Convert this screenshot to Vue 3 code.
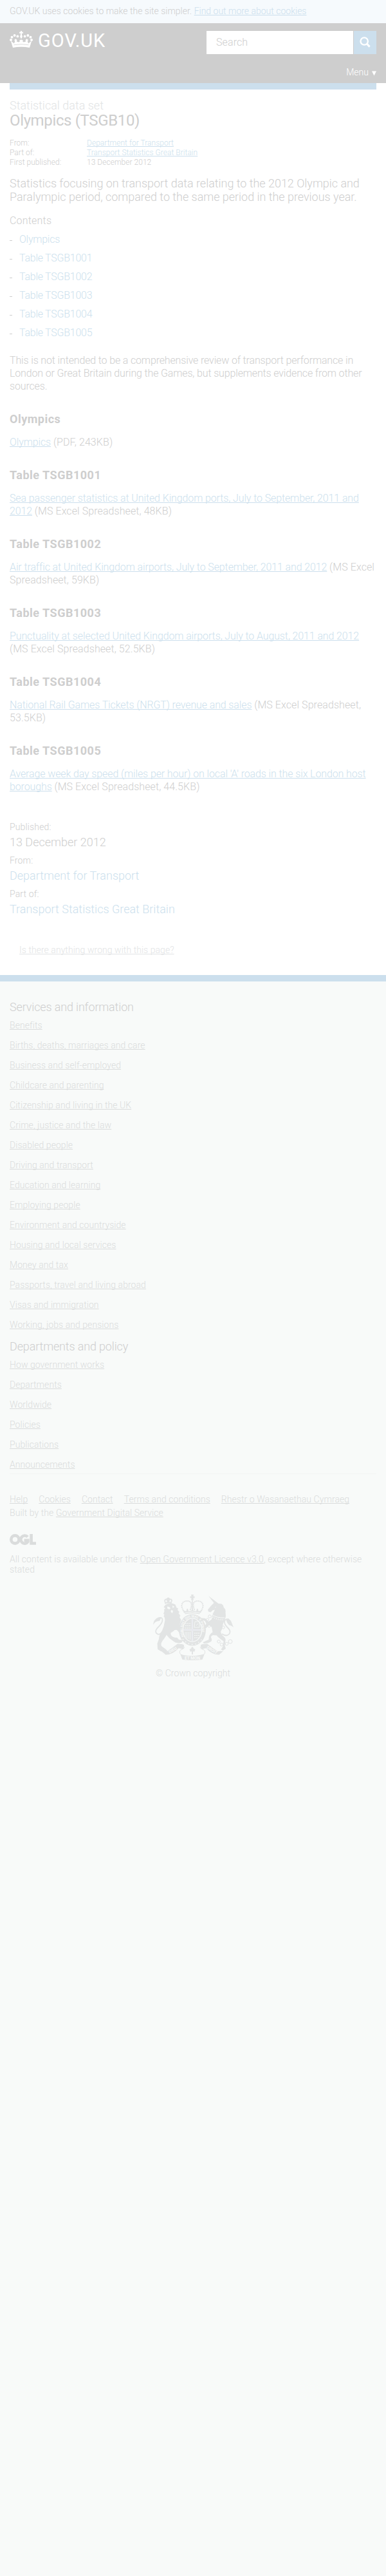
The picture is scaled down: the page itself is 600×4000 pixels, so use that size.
<script setup>
const contents = ['Olympics', 'Table TSGB1001', 'Table TSGB1002', 'Table TSGB1003', 'Table TSGB1004', 'Table TSGB1005']
const tables = [
  { title: 'Olympics', link: 'Olympics', meta: '(PDF, 243KB)' },
  { title: 'Table TSGB1001', link: 'Sea passenger statistics at United Kingdom ports, July to September, 2011 and 2012', meta: '(MS Excel Spreadsheet, 48KB)' },
  { title: 'Table TSGB1002', link: 'Air traffic at United Kingdom airports, July to September, 2011 and 2012', meta: '(MS Excel Spreadsheet, 59KB)' },
  { title: 'Table TSGB1003', link: 'Punctuality at selected United Kingdom airports, July to August, 2011 and 2012', meta: '(MS Excel Spreadsheet, 52.5KB)' },
  { title: 'Table TSGB1004', link: 'National Rail Games Tickets (NRGT) revenue and sales', meta: '(MS Excel Spreadsheet, 53.5KB)' },
  { title: 'Table TSGB1005', link: "Average week day speed (miles per hour) on local 'A' roads in the six London host boroughs", meta: '(MS Excel Spreadsheet, 44.5KB)' },
]
const services = ['Benefits', 'Births, deaths, marriages and care', 'Business and self-employed', 'Childcare and parenting', 'Citizenship and living in the UK', 'Crime, justice and the law', 'Disabled people', 'Driving and transport', 'Education and learning', 'Employing people', 'Environment and countryside', 'Housing and local services', 'Money and tax', 'Passports, travel and living abroad', 'Visas and immigration', 'Working, jobs and pensions']
const departments = ['How government works', 'Departments', 'Worldwide', 'Policies', 'Publications', 'Announcements']
const support = ['Help', 'Cookies', 'Contact', 'Terms and conditions', 'Rhestr o Wasanaethau Cymraeg']
</script>

<template>
  <div class="page">
    <div class="cookie">GOV.UK uses cookies to make the site simpler. <a>Find out more about cookies</a></div>
    <header class="header">
      <div class="bar">
        <div class="brand">
          <svg class="crown" width="36" height="26" viewBox="0 0 36 26">
            <g fill="#fff">
              <path d="M16.900 0h2.200l-.3 1.800 2-.3v2.600l-2-.3.200 2 .9 3.200-1.900 3.500-1.900-3.500.9-3.200.2-2-2 .3V1.500l2 .3z" />
              <circle cx="2" cy="14" r="2" /><circle cx="3.500" cy="9.700" r="1.900" /><circle cx="7.600" cy="6.900" r="2" /><circle cx="12.400" cy="8.400" r="1.900" />
              <circle cx="34" cy="14" r="2" /><circle cx="32.500" cy="9.700" r="1.900" /><circle cx="28.400" cy="6.900" r="2" /><circle cx="23.600" cy="8.400" r="1.900" />
              <path d="M1.800 15.500l5.200 4 1.200-3.500-1-2 2.300-1.800 2 2-.6 2.200 3.200 1 1.700-1-.6-2 2.800-1 2.800 1-.6 2 1.700 1 3.200-1-.6-2.200 2-2 2.300 1.800-1 2 1.200 3.500 5.200-4L31 26Q18 23.700 5 26z" />
            </g>
            <path d="M6.500 21.700q11.500-2 23 0" fill="none" stroke="#cecece" stroke-width=".7" />
          </svg>
          <span class="name">GOV.UK</span>
        </div>
        <div class="search">
          <div class="field">Search</div>
          <div class="go">
            <svg width="18" height="18" viewBox="0 0 18 18"><circle cx="7.200" cy="7" r="5.700" fill="none" stroke="#fff" stroke-width="2.300" /><path d="M11 10.800l4.600 4.800" stroke="#fff" stroke-width="3" /></svg>
          </div>
        </div>
      </div>
      <div class="menu"><span>Menu</span><svg width="7" height="8" viewBox="0 0 7 8"><path d="M0 .5h7L3.500 7.500z" fill="#fff" /></svg></div>
    </header>
    <main class="main">
      <div class="strip"></div>
      <p class="kind">Statistical data set</p>
      <h1>Olympics (TSGB10)</h1>
      <dl class="facts">
        <dt>From:</dt><dd><a>Department for Transport</a></dd>
        <dt>Part of:</dt><dd><a>Transport Statistics Great Britain</a></dd>
        <dt>First published:</dt><dd>13 December 2012</dd>
      </dl>
      <p class="lead">Statistics focusing on transport data relating to the 2012 Olympic and Paralympic period, compared to the same period in the previous year.</p>
      <h2 class="toc-title">Contents</h2>
      <ul class="toc"><li v-for="c in contents" :key="c"><i></i><a>{{ c }}</a></li></ul>
      <p class="intro">This is not intended to be a comprehensive review of transport performance in London or Great Britain during the Games, but supplements evidence from other sources.</p>
      <section v-for="t in tables" :key="t.title" class="table">
        <h3>{{ t.title }}</h3>
        <p><a>{{ t.link }}</a> <span class="meta">{{ t.meta }}</span></p>
      </section>
      <dl class="details">
        <dt>Published:</dt><dd>13 December 2012</dd>
        <dt>From:</dt><dd class="blue">Department for Transport</dd>
        <dt>Part of:</dt><dd class="blue">Transport Statistics Great Britain</dd>
      </dl>
      <p class="report"><a>Is there anything wrong with this page?</a></p>
    </main>
    <footer class="footer">
      <h2>Services and information</h2>
      <ul><li v-for="s in services" :key="s"><a>{{ s }}</a></li></ul>
      <h2>Departments and policy</h2>
      <ul><li v-for="d in departments" :key="d"><a>{{ d }}</a></li></ul>
      <div class="legal">
        <nav><a v-for="s in support" :key="s">{{ s }}</a></nav>
        <p class="built">Built by the <a>Government Digital Service</a></p>
        <svg class="ogl" width="41" height="17" viewBox="0 0 41 17" fill="none" stroke="#dadcdc" stroke-width="4.600">
          <circle cx="8.400" cy="8.500" r="6.100" /><path d="M28 4.600A6.100 6.100 0 1 0 28.400 12V9.700H22.500" /><path d="M33.600 0v14.500H41" />
        </svg>
        <p class="licence">All content is available under the <a>Open Government Licence v3.0</a>, except where otherwise stated</p>
        <div class="crest">
          <svg width="125" height="102" viewBox="0 0 125 102" fill="#e2e4e4">
            <!-- lion -->
            <path d="M18.500 14.800L17 9l1.500-2 2.500-.8L22 5l1.500-.6L25 5l1 1.200 2.800.6L30 9l-1.500 5.200Q23.500 12.500 18.500 14.800z" />
            <path d="M19.500 12l-.6-2.600 1.800-1.200 1.200 3zM27.500 11.500l.6-2.600-1.800-1-1.300 3z" fill="#f8faf9" />
            <path d="M19 16q8-4.500 15.500-.5l2 5 2.500 1-1 2.500 3 3-1.500 2 3 4-1.500 2 2.500 4-1 4q-2.500 5-1 9 4 4 3.500 11l-5-4.500-3-3.500-3.500 0q-2 2.500-6 4.500-.5 4 3 6 3 1.500 7 1.500l2.500 3 6 1-1.500 3.500-4 1-6-1-5-3.500q-6-4-8.500-8.500-3.500 6-6.500 9.500-3 4-1.500 8l5.500 4 3.500 3-2 2.500-8-1.500-5-3-.5-9 2.500-7q.5-8 5-13l2.500-6.500q1-6 2-9.500l-.5-4-1.500-2 1-3-1.500-1 1.500-4-.5-3 2-1.500-2.500-2z" />
            <path d="M22 18.500l3.500 1 1.500 2-2 1.500-3-1.500zM30 17l3 2-2.500 2zM28 24l3 1-1 4-2.500-2z" fill="#f8faf9" />
            <path d="M14 59q-5 5-9 1-3-4 3.500-10 6-6 6-10.500 0-4-4-3.500Q6 37 2 43" fill="none" stroke="#e2e4e4" stroke-width="1.800" />
            <path d="M0 47Q1 38 8 35.500l5 .5q-2 2-3 5-4 0-7 2z" />
            <!-- crown over the garter -->
            <path d="M59.500 3l-.4-3h3.800l-.4 3 2-.4v3l-2-.4.3 3.500h-3.600l.3-3.500-2 .4v-3z" />
            <g fill="none" stroke="#e2e4e4" stroke-width="2">
              <path d="M49 28q-5-7-4.500-11.500Q46 10 52.500 10 58 10 59.500 14q.5 5-2 10M73 28q5-7 4.500-11.500Q76 10 69.500 10 64 10 62.500 14q-.5 5 2 10" stroke-dasharray="2 .7" />
              <path d="M61 9v19" stroke-width="1.600" />
            </g>
            <path d="M47 25l4.500 1 1-4 1.500 0 1 4 4.500-1 1.500-5 1.500 5 4.500 1 1-4h1.500l1 4 4.500-1-3 5.500q-11-2.500-22 0z" />
            <path d="M49.500 28.500q11.500-3 23 0" fill="none" stroke="#f8faf9" stroke-width="1" />
            <!-- garter and shield -->
            <ellipse cx="61" cy="55" rx="21" ry="24.500" />
            <ellipse cx="61" cy="55" rx="15.200" ry="18.800" fill="#f8faf9" />
            <ellipse cx="61" cy="55" rx="14" ry="17.600" />
            <path d="M61 37v36M46.500 55h29" stroke="#f4f6f7" stroke-width="2.200" />
            <path d="M61 37v36M46.500 55h29" stroke="#dfe1ea" stroke-width=".8" />
            <path d="M50 45h9M50 48.500h9M49 52h10M64 60h9M64 63.500h9M64 67h7" stroke="#f8faf9" stroke-width="1" stroke-dasharray="2 1" />
            <path d="M65 42h7v9h-8zM67 48l3-3M50 58v8M52.500 58v10M55 58v11M57.500 58v12" fill="none" stroke="#f8faf9" stroke-width=".8" />
            <path id="garter" d="M46 66C41 47 48 33.500 61 33.500S81 47 76 66" fill="none" />
            <text class="motto" font-size="5.200" dy="1.800"><textPath href="#garter" textLength="76">HONI SOIT QUI MAL Y PENSE</textPath></text>
            <path d="M46 69q7 8 15 8.500T76 69" fill="none" stroke="#f8faf9" stroke-width="1.400" stroke-dasharray="1.500 4" />
            <!-- unicorn -->
            <path d="M86 2l15.500 12 5 .5q3 2 3 5 4 4 3 8l.5 6-2 7q-3 5-3 9-.5 5-3 8 1 5 5.500 8.500 2.500 2 2 5l-1 8 1.500 5-4.500 3-3-1.500 3-5 1-8q-9-6-10.500-9l-6-.5q-3 1-3 3.500 2 4 .5 6-4 3.500-12 3.500l-1-2 9-4q-.5-8 6-11.500l-1.500-8-4-3-5 5-2.500-1.500 3-6-2-4-5-2-.5-2.500 6 .5 5 5 5-3.500 1-7 4-8-3.500 1-3 3-3.500-1-1-3 5.500-6.500 4-4z" />
            <path d="M90 30q9 7 21 6" fill="none" stroke="#f8faf9" stroke-width="1" />
            <path d="M90 33q9 7 20 6" fill="none" stroke="#f8faf9" stroke-width="2" stroke-dasharray="1 2" />
            <path d="M96 19l2 .5-1 1z" fill="#f8faf9" />
            <path d="M107 61q7 5 11.500 0 3-4.500-3-10-5-5-4.500-9 1-5 5.500-3 3 1 3.500 5" fill="none" stroke="#e2e4e4" stroke-width="1.800" />
            <path d="M113 38l4-1 4 4 4 10q-4-3.500-7-3.500l-3-4z" />
            <g fill="none" stroke="#e2e4e4" stroke-width="1"><circle cx="88" cy="34" r="2.300" /><circle cx="84.500" cy="39" r="2" /><circle cx="87" cy="49" r="2" /><circle cx="109" cy="51" r="2.200" /><circle cx="102" cy="73" r="2.300" /><circle cx="106.500" cy="77.700" r="2.300" /><circle cx="114.500" cy="76.500" r="2.300" /><circle cx="120" cy="73" r="3" /></g>
            <!-- ribbon -->
            <path d="M13 88q5-.5 9 0Q31 82 38 76.500q7 0 9.500 1.500 2 3.500-2 7-2.500-2-6-1.500-9 10-20 10zM109 88q-5-.5-9 0Q91 82 84 76.500q-7 0-9.500 1.500-2 3.500 2 7 2.500-2 6-1.500 9 10 20 10z" />
            <path d="M42 92q8 3.500 19 3.200T80 92l-3.500 9Q61 103 45.500 101zM56.500 85l2.500-1 1-2.500h2l1 2.500 2.500 1-1.500 4-2-1v5h-2v-5l-2 1z" />
            <path d="M42 92q-2-5 2-6.500 4-1 5-4M80 92q2-5-2-6.500-4-1-5-4" fill="none" stroke="#e2e4e4" />
            <text class="motto" font-size="6.300" text-anchor="middle" transform="translate(31.500 88) rotate(-31)">DIEU</text>
            <text class="motto" font-size="6.500" text-anchor="middle" x="61" y="101">ET MON</text>
            <text class="motto" font-size="6.300" text-anchor="middle" transform="translate(90.500 88) rotate(31)">DROIT</text>
          </svg>
          <span>© Crown copyright</span>
        </div>
      </div>
    </footer>
  </div>
</template>

<style>
body { margin: 0; background: #fff; }
</style>
<style scoped>
.page { min-height: 4000px; display: flex; flex-direction: column; font: 300 16px/20px Roboto, sans-serif; letter-spacing: -.15px; color: #cecece; }
h1, h2, h3, p, ul, dl, dd { margin: 0; padding: 0; font-weight: inherit; list-style: none; }
a { text-decoration: underline; text-decoration-thickness: 1px; text-underline-offset: 1px; text-decoration-skip-ink: none; color: #ccdfed; }
.cookie { height: 28px; padding: 8px 15px 0; font-size: 14px; line-height: 18px; letter-spacing: 0; background: #f6fafd; }
.header { height: 81px; padding: 12px 15px 0; background: #cecece; color: #fff; }
.bar { display: flex; justify-content: space-between; height: 36px; }
.brand { display: flex; gap: 8px; }
.name { font-size: 29px; line-height: 30px; font-weight: 400; letter-spacing: 1px; }
.search { display: flex; gap: 1px; }
.field { width: 213px; padding-left: 15px; line-height: 36px; background: #fff; color: #cecece; letter-spacing: .1px; }
.go { width: 35px; display: flex; align-items: center; justify-content: center; background: #ccdfed; }
.menu { display: flex; justify-content: flex-end; align-items: center; gap: 5px; margin-top: 20px; font-size: 14px; line-height: 16px; letter-spacing: 0; }
.menu svg { margin-top: 4px; }
.main { padding: 0 15px; height: 1385px; }
.strip { height: 10px; background: #ccdfed; }
.kind { margin-top: 14px; font-size: 18px; line-height: 21px; letter-spacing: 0; color: #e2e4e5; }
h1 { font-size: 24px; line-height: 26px; font-weight: 400; letter-spacing: -.36px; }
.facts { display: grid; grid-template-columns: 120px 1fr; margin-top: 15px; font-size: 12px; line-height: 15px; letter-spacing: .03px; }
.lead { margin-top: 14px; font-size: 18px; line-height: 21px; letter-spacing: -.03px; }
.toc-title { margin-top: 17px; font-size: 16px; letter-spacing: .2px; }
.toc li { display: flex; align-items: center; margin-top: 9px; letter-spacing: -.25px; }
.toc i { width: 4px; height: 1px; margin: 3px 11px 0 0; background: #cecece; }
.toc a { text-decoration: none; }
.intro { margin-top: 23px; }
.table { margin-top: 30px; letter-spacing: -.12px; }
.table h3 { margin-bottom: 16px; font-size: 18px; line-height: 21px; font-weight: 700; letter-spacing: .5px; }
.meta { letter-spacing: .08px; }
.details { margin-top: 44px; }
.details dt { font-size: 14px; line-height: 16px; letter-spacing: .15px; }
.details dd { margin: 5px 0 10px; font-size: 18px; line-height: 21px; letter-spacing: 0; }
.blue { color: #ccdfed; }
.report { margin: 45px 0 0 15px; font-size: 14px; line-height: 16px; letter-spacing: .05px; }
.report a { color: #e2e4e5; }
.footer { flex: 1; border-top: 10px solid #ccdfed; padding: 29px 15px 0; background: #f8faf9; font-size: 14px; line-height: 16px; letter-spacing: .06px; color: #dadcdc; }
.footer a { color: inherit; }
.footer h2 { font-size: 18px; line-height: 21px; letter-spacing: -.15px; color: #cecece; }
.footer li { margin: 10px 0 15px; }
.footer li + li { margin-top: 0; }
.footer ul + h2 { margin-top: 0; }
.legal { margin-top: -9px; border-top: 1px solid #f2f4f3; padding-top: 31px; }
.legal nav { display: flex; gap: 17px; white-space: nowrap; }
.built { margin-top: 5px; }
.ogl { display: block; margin-top: 25px; }
.licence { margin-top: 14px; }
.crest { display: flex; flex-direction: column; align-items: center; gap: 12px; margin-top: 31px; }
.motto { font-family: Roboto, sans-serif; font-weight: 700; letter-spacing: 0; fill: #f8faf9; }
</style>
